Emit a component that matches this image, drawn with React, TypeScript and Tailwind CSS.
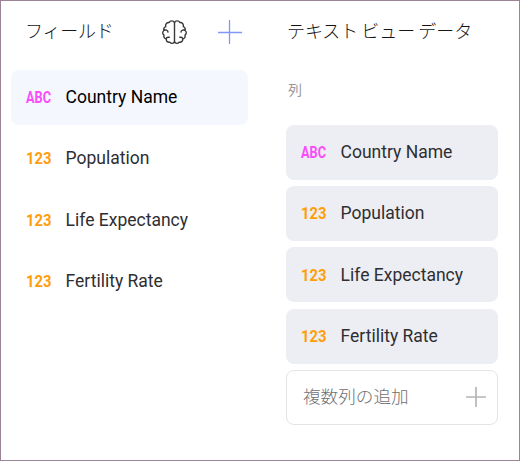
type Field = { name: string; kind: 'ABC' | '123' };

const fields: Field[] = [
  { name: 'Country Name', kind: 'ABC' },
  { name: 'Population', kind: '123' },
  { name: 'Life Expectancy', kind: '123' },
  { name: 'Fertility Rate', kind: '123' },
];

function TypeBadge({ kind }: { kind: Field['kind'] }) {
  return (
    <svg width="30" height="26" className="shrink-0 overflow-visible font-['Roboto',sans-serif] text-[17px] font-bold">
      {kind === 'ABC' ? (
        <text x="0" y="19" textLength="25" lengthAdjust="spacingAndGlyphs" fill="#fa4dfa">ABC</text>
      ) : (
        <text x="0" y="19.3" textLength="25.5" lengthAdjust="spacingAndGlyphs" fill="#ff9e0a">123</text>
      )}
    </svg>
  );
}

function FieldRow({ field, tone }: { field: Field; tone: string }) {
  return (
    <li className={`flex h-[55px] items-center gap-[9.6px] rounded-lg pb-[0.6px] pl-[15px] ${tone}`}>
      <TypeBadge kind={field.kind} />
      <span className="whitespace-nowrap text-[17.5px] leading-6">{field.name}</span>
    </li>
  );
}

function BrainIcon() {
  const half =
    'M12.5 2.6C11.6.3 8.1.2 7.2 2.6C4.9 2.3 3.1 4.2 3.7 6.6C2 7.2 1.3 9 2 10.5C.3 11.5.3 14.2 2 15.2C1.4 17.1 2.5 18.8 4.3 19C4 21.2 5.8 22.7 7.8 22.1C9 23.9 11.8 23.7 12.5 21.8M2 10.5C3.5 9.5 5.9 10 6 12.1M4.3 19C4.5 17.6 5.7 16.9 7.2 17.3';
  return (
    <svg width="25" height="25" viewBox="0 0 25 25" fill="none" stroke="#383838" strokeWidth="1.4" strokeLinecap="round" strokeLinejoin="round">
      <path d={half} />
      <path d={half} transform="matrix(-1 0 0 1 25 0)" />
      <path d="M12.5 2.6v19.2" />
    </svg>
  );
}

export default function App() {
  return (
    <main className="flex h-[461px] w-[520px] border border-[#9a8495] bg-white font-['Roboto','Noto_Sans_CJK_JP',sans-serif] text-[#2e2e32]">
      <section className="ml-[10px] w-[237px]">
        <header className="flex h-[68.8px] items-start pl-[14px]">
          <h1 className="mt-[19px] w-[137px] whitespace-nowrap text-[18px] font-light leading-6 tracking-[-0.2px] text-[#151518]">フィールド</h1>
          <span className="mt-[19px]"><BrainIcon /></span>
          <svg className="ml-[31px] mt-[19px]" width="24" height="24" stroke="#8196f5" strokeWidth="1.3">
            <path d="M0 12.5h24M11.5 0v24" />
          </svg>
        </header>
        <ul className="flex flex-col gap-[6.3px]">
          {fields.map((f, i) => (
            <FieldRow key={f.name} field={f} tone={i === 0 ? 'bg-[#f4f7fe] text-black' : ''} />
          ))}
        </ul>
      </section>
      <section className="ml-[38px] w-[212px]">
        <h1 className="mt-[19px] whitespace-nowrap pl-px text-[18px] font-light leading-6 tracking-[-0.1px] text-[#151518] [word-spacing:-1px]">テキスト ビュー データ</h1>
        <h2 className="mt-[36px] pl-[2px] text-[14px] font-normal leading-5 text-[#999]">列</h2>
        <ul className="mt-[24.8px] flex flex-col gap-[6.3px]">
          {fields.map((f) => (
            <FieldRow key={f.name} field={f} tone="bg-[#edeef3]" />
          ))}
        </ul>
        <button className="mt-[6.3px] flex h-[55px] w-full items-center justify-between rounded-lg border border-[#e4e4e6] pl-4 pr-[11px] text-[17.6px] font-light text-[#707070]">
          <span>複数列の追加</span>
          <svg width="20" height="20" stroke="#b5b5b5" strokeWidth="1.7">
            <path d="M0 10h20M10 0v20" />
          </svg>
        </button>
      </section>
    </main>
  );
}
